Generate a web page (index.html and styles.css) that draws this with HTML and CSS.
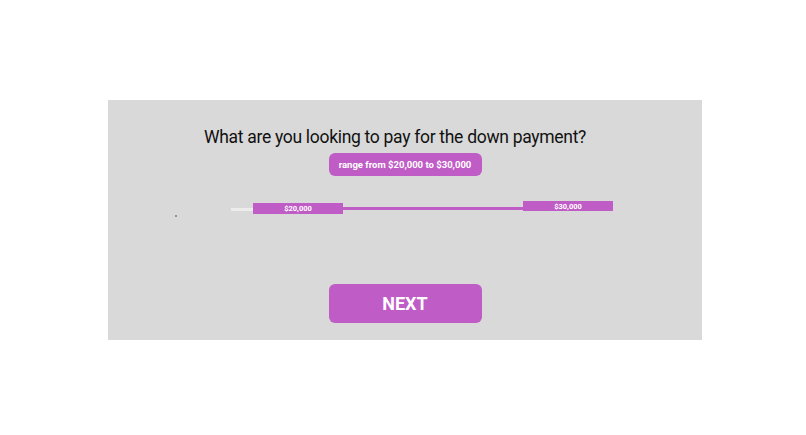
FILE: index.html
```html
<html lang="en">

<head>
    <meta charset="UTF-8">
    <meta name="viewport" content="width=device-width, initial-scale=1.0">
    <title>Down Payment</title>
    <link rel="stylesheet" href="styles.css">
</head>

<body>
    <div class="page">
        <div class="panel">
            <h1 class="question">What are you looking to pay for the down payment?</h1>
            <div class="range-pill">range from $20,000 to $30,000</div>

            <div class="slider-row">
                <span class="dot"></span>
                <div class="slider">
                    <div class="track"></div>
                    <div class="track-fill"></div>
                    <div class="thumb thumb-low">$20,000</div>
                    <div class="thumb thumb-high">$30,000</div>
                </div>
            </div>

            <button class="next-btn">NEXT</button>
        </div>
    </div>
</body>

</html>
```

FILE: styles.css
```css
body {
    margin: 0;
    padding: 0;
    background-color: #ffffff;
    font-family: Roboto, "Liberation Sans", Arial, sans-serif;
}

.page {
    padding: 100px 0 0 108px;
}

.panel {
    width: 594px;
    height: 240px;
    background-color: #d9d9d9;
    display: flex;
    flex-direction: column;
    align-items: center;
    box-sizing: border-box;
    padding-top: 25px;
}

.question {
    margin: 0 20px 0 0;
    font-size: 17.5px;
    font-weight: 400;
    line-height: 24px;
    letter-spacing: -0.3px;
    color: #111;
}

.range-pill {
    margin-top: 4px;
    width: 153px;
    height: 23px;
    border-radius: 6px;
    background-color: #c05cc6;
    color: white;
    font-size: 9.5px;
    font-weight: 700;
    display: flex;
    align-items: center;
    justify-content: center;
}

.slider-row {
    align-self: stretch;
    position: relative;
    height: 20px;
    margin-top: 25px;
}

.dot {
    position: absolute;
    left: 67px;
    top: 14px;
    width: 2px;
    height: 2px;
    border-radius: 50%;
    background-color: #777;
}

.slider {
    position: absolute;
    left: 123px;
    top: 0;
    width: 382px;
    height: 20px;
}

.track {
    position: absolute;
    left: 0;
    top: 7px;
    width: 40px;
    height: 3px;
    background-color: #ececec;
}

.track-fill {
    position: absolute;
    left: 110px;
    top: 6px;
    width: 185px;
    height: 3px;
    background-color: #c05cc6;
}

.thumb {
    position: absolute;
    height: 11px;
    background-color: #c05cc6;
    color: white;
    font-size: 7.5px;
    font-weight: 700;
    display: flex;
    align-items: center;
    justify-content: center;
}

.thumb-low {
    left: 22px;
    top: 2px;
    width: 90px;
}

.thumb-high {
    left: 292px;
    top: 0;
    width: 90px;
    height: 10px;
}

.next-btn {
    margin-top: 63px;
    width: 153px;
    height: 39px;
    border: none;
    border-radius: 6px;
    background-color: #c05cc6;
    color: white;
    font-family: Roboto, "Liberation Sans", Arial, sans-serif;
    font-size: 18px;
    font-weight: 700;
    cursor: pointer;
}
```
